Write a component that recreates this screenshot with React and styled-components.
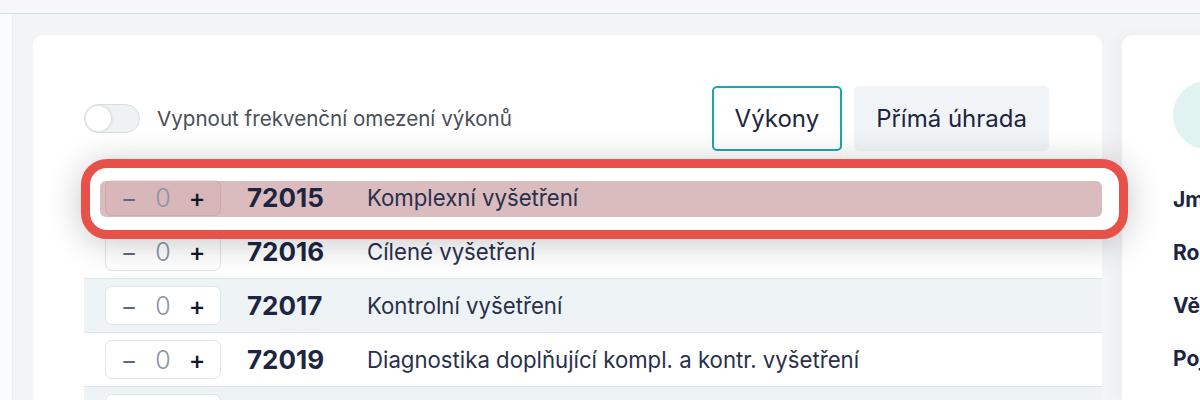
import React from 'react';
import styled, { createGlobalStyle, css } from 'styled-components';

const GlobalStyle = createGlobalStyle`
  html, body {
    margin: 0;
    padding: 0;
    height: 100%;
    overflow: hidden;
  }
  body {
    background: #f3f4f6;
    font-family: Inter, "Noto Sans", sans-serif;
    color: #1c2541;
  }
  * { box-sizing: border-box; }
`;

// ---------- TOP STRIP
const TopBar = styled.header`
  height: 14px;
  background: #f4f6f7;
  border-bottom: 1px solid #cfe4e6;
`;

// ---------- PAGE
const Layout = styled.div`
  display: flex;
  height: 386px;
`;

const Sidebar = styled.aside`
  width: 13px;
  flex-shrink: 0;
  background: #fafbfc;
  border-right: 1px solid #eceff2;
`;

const Main = styled.main`
  flex: 1;
  display: flex;
  gap: 20px;
  padding: 21px 0 0 20px;
  min-width: 0;
`;

// ---------- LEFT CARD
const Card = styled.section`
  width: 1069px;
  flex-shrink: 0;
  background: #ffffff;
  border-radius: 10px 10px 0 0;
  padding: 51px 53px 0 51px;
`;

const Header = styled.div`
  display: flex;
  align-items: center;
  justify-content: space-between;
  margin-bottom: 20px;
`;

const ToggleLabel = styled.label`
  display: flex;
  align-items: center;
  gap: 17px;
  font-size: 20.6px;
  color: #4a4f57;
`;

const Switch = styled.span`
  position: relative;
  width: 56px;
  height: 29px;
  border-radius: 15px;
  background: #eef2f3;
  border: 1px solid #d3dfe1;

  &::after {
    content: '';
    position: absolute;
    left: 1px;
    top: 1px;
    width: 25px;
    height: 25px;
    border-radius: 50%;
    background: #ffffff;
    box-shadow: 1px 0 3px rgba(0, 0, 0, 0.12);
  }
`;

const Tabs = styled.div`
  display: flex;
  gap: 12px;
`;

const Tab = styled.button`
  height: 65px;
  padding: 0 ${(p) => (p.$active ? '21px' : '20px')};
  font-family: inherit;
  font-size: 24px;
  font-weight: 400;
  color: #1c2541;
  border-radius: 5px;
  cursor: pointer;
  border: 2px solid ${(p) => (p.$active ? '#1ea6a8' : 'transparent')};
  background: ${(p) => (p.$active ? '#ffffff' : '#f1f4f6')};
`;

// ---------- LIST
const List = styled.div`
  margin-right: -53px;
`;

const Row = styled.div`
  position: relative;
  display: flex;
  align-items: center;
  height: 54px;
  padding-left: 21px;
  border-bottom: 1px solid #dbe6ea;
  background: ${(p) => (p.$striped ? '#eef3f5' : '#ffffff')};

  ${(p) =>
    p.$highlight &&
    css`
      z-index: 2;
      background: transparent;
      border-bottom-color: transparent;

      &::before {
        content: '';
        position: absolute;
        top: -12px;
        bottom: -15px;
        left: -3px;
        right: -26px;
        border: 9px solid #e8514a;
        border-radius: 26px;
        background: #ffffff;
        box-shadow: 0 4px 34px rgba(0, 0, 0, 0.22);
        z-index: -1;
      }

      &::after {
        content: '';
        position: absolute;
        top: 10px;
        bottom: 7px;
        left: 16px;
        right: 0;
        border-radius: 6px;
        background: #dbbcbe;
        z-index: -1;
      }
    `}
`;

const Stepper = styled.div`
  display: flex;
  align-items: center;
  width: 116px;
  height: ${(p) => (p.$highlight ? '36px' : '39px')};
  padding: 0 6px;
  border-radius: 7px;
  border: 1px solid ${(p) => (p.$highlight ? 'rgba(120, 70, 75, 0.12)' : '#dfe5e8')};
  background: ${(p) => (p.$highlight ? 'rgba(120, 70, 75, 0.04)' : '#ffffff')};
  font-size: 25px;
`;

const StepItem = styled.span`
  width: 34px;
  text-align: center;
  color: ${(p) => p.$color};
  font-weight: ${(p) => p.$weight || 300};
`;

const Code = styled.span`
  width: 120px;
  margin-left: 26px;
  font-size: 26px;
  font-weight: 700;
  color: #1c2541;
`;

const Name = styled.span`
  font-size: 22.2px;
  color: #28304c;
  white-space: nowrap;
`;

// ---------- RIGHT CARD
const SideCard = styled.section`
  width: 320px;
  flex-shrink: 0;
  background: #ffffff;
  border-radius: 10px 0 0 0;
  padding: 46px 0 0 51px;
  box-shadow: -6px 0 18px rgba(0, 0, 0, 0.03);
`;

const Avatar = styled.div`
  width: 68px;
  height: 68px;
  border-radius: 50%;
  background: #e0f3f1;
  margin-bottom: 24px;
`;

const InfoLine = styled.div`
  height: 53px;
  display: flex;
  align-items: center;
  font-size: 21px;
  font-weight: ${(p) => (p.$value ? 400 : 700)};
  color: ${(p) => (p.$value ? '#6b7280' : '#1c2541')};
  white-space: nowrap;
`;

const procedures = [
  { code: '72015', name: 'Komplexní vyšetření' },
  { code: '72016', name: 'Cílené vyšetření' },
  { code: '72017', name: 'Kontrolní vyšetření' },
  { code: '72019', name: 'Diagnostika doplňující kompl. a kontr. vyšetření' },
  { code: '72021', name: 'Konzilium' },
];

export default function App() {
  return (
    <>
      <GlobalStyle />
      <TopBar />
      <Layout>
        <Sidebar />
        <Main>
          <Card>
            <Header>
              <ToggleLabel>
                <Switch />
                Vypnout frekvenční omezení výkonů
              </ToggleLabel>
              <Tabs>
                <Tab $active>Výkony</Tab>
                <Tab>Přímá úhrada</Tab>
              </Tabs>
            </Header>

            <List>
              {procedures.map((p, i) => (
                <Row key={p.code} $highlight={i === 0} $striped={i % 2 === 0}>
                  <Stepper $highlight={i === 0}>
                    <StepItem $color="#5d6a7e" $weight={400}>−</StepItem>
                    <StepItem $color="#8a94a3">0</StepItem>
                    <StepItem $color="#111827" $weight={500}>+</StepItem>
                  </Stepper>
                  <Code>{p.code}</Code>
                  <Name>{p.name}</Name>
                </Row>
              ))}
            </List>
          </Card>

          <SideCard>
            <Avatar />
            <InfoLine>Jméno</InfoLine>
            <InfoLine>Rodné číslo</InfoLine>
            <InfoLine>Věk</InfoLine>
            <InfoLine>Pojišťovna</InfoLine>
            <InfoLine $value>2024</InfoLine>
          </SideCard>
        </Main>
      </Layout>
    </>
  );
}
